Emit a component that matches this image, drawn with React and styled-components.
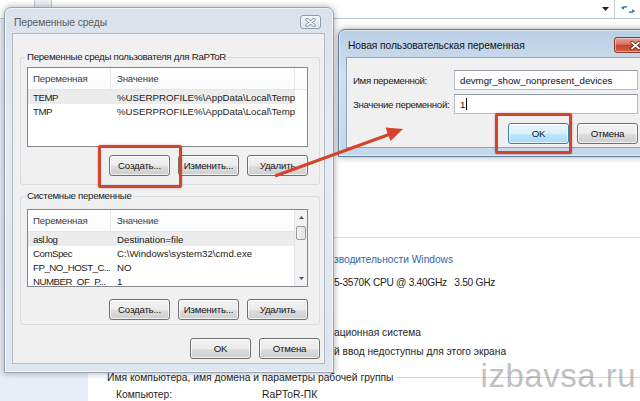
import React from "react";
import styled, { createGlobalStyle } from "styled-components";

const FONT = `"Liberation Sans", Arial, sans-serif`;

const GlobalStyle = createGlobalStyle`
  html, body { margin: 0; padding: 0; background: #fff; }
  body { font-family: ${FONT}; }
  * { box-sizing: border-box; }
`;

const Screen = styled.div`
  position: relative;
  width: 640px;
  height: 401px;
  overflow: hidden;
  background: #fff;
  display: flex;
  flex-direction: column;
  font-size: 9.7px;
  color: #1b1b1b;
`;

/* explorer window in the background */
const AddressBar = styled.div`
  display: flex;
  flex-shrink: 0;
  height: 19px;
  background: #fff;
  border-bottom: 1px solid #b9c4d0;
`;

const NavButtons = styled.div`
  width: 35px;
  border-right: 1px solid #c6cdd6;
`;

const Gap = styled.div`
  width: 17px;
  background: #eef1f5;
  border-right: 1px solid #c6cdd6;
`;

const AddressField = styled.div`
  flex: 1;
  display: flex;
  align-items: center;
  justify-content: flex-end;
  padding-right: 5px;
  border-right: 1px solid #c6cdd6;
`;

const RefreshBox = styled.div`
  width: 25px;
  display: flex;
  align-items: center;
  justify-content: center;
`;

const ExplorerBody = styled.div`
  flex: 1;
  display: flex;
  min-height: 0;
`;

const NavPane = styled.div`
  width: 88px;
  background: #e8eef7;
`;

const Content = styled.div`
  flex: 1;
  display: flex;
  flex-direction: column;
  padding-left: 19px;
  font-size: 10.2px;
`;

const Rule = styled.div`
  margin: 218px 0 0 227px;
  border-top: 1px solid #d9dfe6;
`;

const InfoLine = styled.div`
  margin-top: ${(p) => p.$gap}px;
  margin-left: ${(p) => (p.$indent ? 227 : 0)}px;
  height: 16px;
  line-height: 16px;
  white-space: nowrap;
  letter-spacing: ${(p) => (p.$tight ? "-0.3px" : "0")};
  color: ${(p) => (p.$link ? "#3466a8" : "#1e1e1e")};
`;

const SectionHead = styled.div`
  margin-top: 12px;
  height: 16px;
  display: flex;
  align-items: center;
  white-space: nowrap;
  font-size: 10.3px;
  color: #1e1e1e;

  &::after {
    content: "";
    flex: 1;
    margin-left: 3px;
    border-top: 1px solid #cfd4da;
  }
`;

const InfoGrid = styled.div`
  margin-top: 5px;
  padding-left: 9px;
  display: grid;
  grid-template-columns: 146px auto;
  line-height: 14px;
  font-size: 10.3px;
  color: #1e1e1e;
`;

/* dialog windows */
const Window = styled.div`
  position: absolute;
  left: ${(p) => p.$x}px;
  top: ${(p) => p.$y}px;
  width: ${(p) => p.$w}px;
  display: flex;
  flex-direction: column;
  padding: 0 8px 8px 7px;
  border: 1px solid ${(p) => (p.$active ? "#5d7b9a" : "#97a5b5")};
  border-radius: 7px 7px 0 0;
  background: ${(p) =>
    p.$active
      ? "linear-gradient(#b9cee5, #d1dfef 35%, #c5d7ea)"
      : "linear-gradient(#d9e2ec, #e6ecf3 35%, #dde5ee)"};
  box-shadow: 0 0 7px rgba(0, 0, 0, 0.35), inset 0 0 0 1px rgba(255, 255, 255, 0.55);
`;

const TitleBar = styled.div`
  height: ${(p) => p.$h}px;
  display: flex;
  align-items: center;
  justify-content: space-between;
  padding: 3px 4px 0 2px;
`;

const Title = styled.span`
  font-size: 10.3px;
  letter-spacing: -0.1px;
  color: ${(p) => (p.$active ? "#141414" : "#5c5c5c")};
  white-space: nowrap;
`;

const CloseBtn = styled.div`
  width: ${(p) => (p.$active ? 43 : 21)}px;
  height: ${(p) => (p.$active ? 16 : 14)}px;
  display: flex;
  align-items: center;
  justify-content: center;
  border: 1px solid ${(p) => (p.$active ? "#8a3a2a" : "#8e9cab")};
  border-radius: 3px;
  background: ${(p) =>
    p.$active
      ? "linear-gradient(#e6a08e, #d6755f 45%, #c4452b 52%, #d2603f)"
      : "linear-gradient(#f1f4f7, #e4e9ef 50%, #d9e0e8)"};
  box-shadow: inset 0 0 0 1px rgba(255, 255, 255, 0.45);
`;

const Client = styled.div`
  display: flex;
  flex-direction: column;
  background: #f0f0f0;
  border: 1px solid ${(p) => (p.$active ? "#8ea4bb" : "#b0bac6")};
  padding: ${(p) => p.$pad};
`;

const Group = styled.fieldset`
  margin: ${(p) => p.$mt}px 0 0;
  padding: ${(p) => p.$pt}px 11px ${(p) => p.$pb}px 6px;
  border: 1px solid #d5dde5;
  border-radius: 3px;
  min-width: 0;
`;

const GroupLabel = styled.legend`
  padding: 0 1px;
  margin-left: -1px;
  line-height: 12px;
  font-size: 9.7px;
  letter-spacing: -0.3px;
  color: #1b1b1b;
`;

const ListView = styled.div`
  height: ${(p) => p.$h}px;
  display: flex;
  border: 1px solid #828790;
  background: #fff;
  overflow: hidden;
`;

const Table = styled.div`
  flex: 1;
  display: flex;
  flex-direction: column;
  min-width: 0;
`;

const HeaderRow = styled.div`
  display: flex;
  flex-shrink: 0;
  height: 22px;
  background: linear-gradient(#fff, #fafbfc);
  border-bottom: 1px solid #e3e5e8;
`;

const HeaderCell = styled.div`
  width: ${(p) => (p.$w ? `${p.$w}px` : "auto")};
  flex: ${(p) => (p.$w ? "none" : 1)};
  display: flex;
  align-items: center;
  padding-left: ${(p) => p.$pad || 5}px;
  border-right: ${(p) => (p.$w ? "1px solid #e3e5e8" : "none")};
  color: #3a3f47;
  letter-spacing: -0.2px;
  white-space: nowrap;
`;

const Row = styled.div`
  display: flex;
  flex-shrink: 0;
  height: 14px;
  width: 267px;
  align-items: center;
  background: ${(p) => (p.$selected ? "#ececec" : "transparent")};
  white-space: nowrap;
`;

const Cell = styled.div`
  width: ${(p) => p.$w}px;
  padding-left: ${(p) => p.$pad}px;
  overflow: hidden;
  letter-spacing: ${(p) => (p.$tight ? "-0.5px" : "0")};
`;

const ScrollBar = styled.div`
  width: 13px;
  display: flex;
  flex-direction: column;
  background: #f1f1f1;
  border-left: 1px solid #e6e6e6;
`;

const ScrollArrow = styled.div`
  height: 15px;
  display: flex;
  align-items: center;
  justify-content: center;
`;

const Thumb = styled.div`
  height: 14px;
  margin: 1px 1px 0;
  border: 1px solid #979ca3;
  border-radius: 2px;
  background: linear-gradient(90deg, #f3f3f3, #e2e2e2);
`;

const Track = styled.div`
  flex: 1;
`;

const ButtonRow = styled.div`
  display: flex;
  justify-content: flex-end;
  gap: 8px;
  margin-top: ${(p) => p.$mt}px;
`;

const Button = styled.div`
  width: 61px;
  height: 21px;
  display: flex;
  align-items: center;
  justify-content: center;
  border: 1px solid ${(p) => (p.$default ? "#3c7fb1" : "#707070")};
  border-radius: 3px;
  background: ${(p) =>
    p.$default
      ? "linear-gradient(#eaf6fd, #d9f0fc 50%, #bee6fd 51%, #a7d9f5)"
      : "linear-gradient(#f2f2f2, #ebebeb 50%, #dddddd 51%, #cfcfcf)"};
  box-shadow: inset 0 0 0 1px rgba(255, 255, 255, 0.7);
  color: #151515;
  letter-spacing: -0.2px;
  white-space: nowrap;
`;

const FieldGrid = styled.div`
  display: grid;
  grid-template-columns: 101px 184px;
  row-gap: 4px;
  align-items: center;
`;

const FieldLabel = styled.div`
  color: #1b1b1b;
  letter-spacing: -0.35px;
  white-space: nowrap;
`;

const TextBox = styled.div`
  height: 20px;
  display: flex;
  align-items: center;
  padding: 0 5px;
  background: #fff;
  border: 1px solid #b5bcc6;
  border-top-color: #9199a3;
  color: #111;
  white-space: nowrap;
`;

const Caret = styled.span`
  display: inline-block;
  width: 1px;
  height: 12px;
  margin-left: 1px;
  background: #000;
`;

const DialogButtons = styled(ButtonRow)`
  width: 285px;
`;

/* overlays added on the screenshot */
const Highlight = styled.div`
  position: absolute;
  left: ${(p) => p.$x}px;
  top: ${(p) => p.$y}px;
  width: ${(p) => p.$w}px;
  height: ${(p) => p.$h}px;
  border: 3px solid #d3442a;
  border-radius: 2px;
  box-shadow: 0 0 2px rgba(110, 20, 0, 0.45);
`;

const ArrowLayer = styled.svg`
  position: absolute;
  left: 0;
  top: 0;
  pointer-events: none;
`;

const Watermark = styled.div`
  position: absolute;
  right: 4px;
  top: 357px;
  font-family: ${FONT};
  font-size: 33px;
  color: rgba(140, 140, 140, 0.55);
  letter-spacing: 0.5px;
`;

const CloseIcon = ({ active }) => (
  <svg width="11" height="9" viewBox="0 0 11 9">
    <path
      d="M2 1.5 L9 7.5 M9 1.5 L2 7.5"
      stroke={active ? "#5a1a10" : "#7d8794"}
      strokeWidth="3.2"
      strokeLinecap="round"
    />
    <path
      d="M2 1.5 L9 7.5 M9 1.5 L2 7.5"
      stroke={active ? "#fff" : "#f4f6f8"}
      strokeWidth="1.7"
      strokeLinecap="round"
    />
  </svg>
);

const Tri = ({ down }) => (
  <svg width="5" height="3" viewBox="0 0 5 3">
    <path d={down ? "M0 0 H5 L2.5 3 Z" : "M0 3 H5 L2.5 0 Z"} fill="#4b5a70" />
  </svg>
);

const userVars = [
  ["TEMP", "%USERPROFILE%\\AppData\\Local\\Temp"],
  ["TMP", "%USERPROFILE%\\AppData\\Local\\Temp"],
];

const systemVars = [
  ["asl.log", "Destination=file"],
  ["ComSpec", "C:\\Windows\\system32\\cmd.exe"],
  ["FP_NO_HOST_C...", "NO"],
  ["NUMBER_OF_P...", "1"],
];

const VarList = ({ rows, height, scroll }) => (
  <ListView $h={height}>
    <Table>
      <HeaderRow>
        <HeaderCell $w={83}>Переменная</HeaderCell>
        <HeaderCell $w={184} $pad={6}>
          Значение
        </HeaderCell>
        {!scroll && <HeaderCell />}
      </HeaderRow>
      {rows.map(([name, value], i) => (
        <Row key={name} $selected={i === 0}>
          <Cell $w={83} $pad={5} $tight>
            {name}
          </Cell>
          <Cell $w={184} $pad={6}>
            {value}
          </Cell>
        </Row>
      ))}
    </Table>
    {scroll && (
      <ScrollBar>
        <ScrollArrow>
          <Tri />
        </ScrollArrow>
        <Thumb />
        <Track />
        <ScrollArrow>
          <Tri down />
        </ScrollArrow>
      </ScrollBar>
    )}
  </ListView>
);

export default function App() {
  return (
    <Screen>
      <GlobalStyle />

      <AddressBar>
        <NavButtons />
        <Gap />
        <AddressField>
          <svg width="7" height="4" viewBox="0 0 7 4">
            <path d="M0 0 H7 L3.5 4 Z" fill="#222" />
          </svg>
        </AddressField>
        <RefreshBox>
          <svg width="14" height="11" viewBox="0 0 14 11">
            <path d="M6 3 A3.5 3.5 0 0 0 1.5 5" stroke="#3c78c2" strokeWidth="1.4" fill="none" />
            <path d="M0 3.5 L3 2 L2.5 6 Z" fill="#3c78c2" />
            <path d="M8 8 A3.5 3.5 0 0 0 12.5 6" stroke="#3c78c2" strokeWidth="1.4" fill="none" />
            <path d="M14 7.5 L11 9 L11.5 5 Z" fill="#3c78c2" />
          </svg>
        </RefreshBox>
      </AddressBar>

      <ExplorerBody>
        <NavPane />
        <Content>
          <Rule />
          <InfoLine $indent $link $gap={14}>
            зводительности Windows
          </InfoLine>
          <InfoLine $indent $tight $gap={7}>
            5-3570K CPU @ 3.40GHz&nbsp;&nbsp; 3.50 GHz
          </InfoLine>
          <InfoLine $indent $gap={34}>
            ационная система
          </InfoLine>
          <InfoLine $indent $gap={3}>
            й ввод недоступны для этого экрана
          </InfoLine>
          <SectionHead>Имя компьютера, имя домена и параметры рабочей группы</SectionHead>
          <InfoGrid>
            <span>Компьютер:</span>
            <span>RaPToR-ПК</span>
          </InfoGrid>
        </Content>
      </ExplorerBody>

      <Window $x={4} $y={7} $w={330}>
        <TitleBar $h={25}>
          <Title>Переменные среды</Title>
          <CloseBtn>
            <CloseIcon />
          </CloseBtn>
        </TitleBar>
        <Client $pad="17px 4px 4px 7px">
          <Group $mt={0} $pt={4} $pb={8}>
            <GroupLabel>Переменные среды пользователя для RaPToR</GroupLabel>
            <VarList rows={userVars} height={80} />
            <ButtonRow $mt={8}>
              <Button>Создать...</Button>
              <Button>Изменить...</Button>
              <Button>Удалить</Button>
            </ButtonRow>
          </Group>
          <Group $mt={5} $pt={7} $pb={4}>
            <GroupLabel>Системные переменные</GroupLabel>
            <VarList rows={systemVars} height={78} scroll />
            <ButtonRow $mt={12}>
              <Button>Создать...</Button>
              <Button>Изменить...</Button>
              <Button>Удалить</Button>
            </ButtonRow>
          </Group>
          <ButtonRow $mt={13}>
            <Button>OK</Button>
            <Button>Отмена</Button>
          </ButtonRow>
        </Client>
      </Window>

      <Window $x={338} $y={29} $w={332} $active>
        <TitleBar $h={27}>
          <Title $active>Новая пользовательская переменная</Title>
          <CloseBtn $active>
            <CloseIcon active />
          </CloseBtn>
        </TitleBar>
        <Client $active $pad="12px 0 3px 6px">
          <FieldGrid>
            <FieldLabel>Имя переменной:</FieldLabel>
            <TextBox>devmgr_show_nonpresent_devices</TextBox>
            <FieldLabel>Значение переменной:</FieldLabel>
            <TextBox>
              1<Caret />
            </TextBox>
          </FieldGrid>
          <DialogButtons $mt={9}>
            <Button $default>OK</Button>
            <Button>Отмена</Button>
          </DialogButtons>
        </Client>
      </Window>

      <Highlight $x={98} $y={145} $w={84} $h={43} />
      <Highlight $x={495} $y={113} $w={77} $h={41} />

      <ArrowLayer width="640" height="401" viewBox="0 0 640 401">
        <line x1="275" y1="176" x2="389" y2="134.5" stroke="#d3442a" strokeWidth="3" />
        <path d="M403 129 L390.5 141 L385.5 127.5 Z" fill="#d3442a" />
      </ArrowLayer>

      <Watermark>izbavsa.ru</Watermark>
    </Screen>
  );
}
